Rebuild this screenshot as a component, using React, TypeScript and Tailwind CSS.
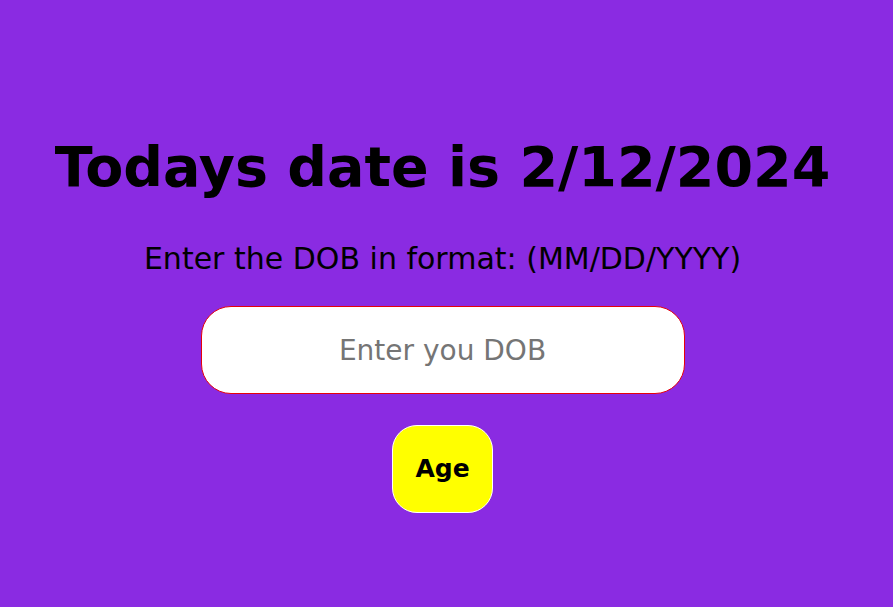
export default function App() {
  return (
    <div
      className="min-h-screen w-full bg-[#8a2be2] flex flex-col items-center pt-[122px] pr-[8px]"
      style={{ fontFamily: '"Comic Sans MS", "DejaVu Sans", sans-serif' }}
    >
      <h1 className="text-[55.5px] leading-[90px] font-bold text-black">Todays date is 2/12/2024</h1>
      <p className="mt-[27px] text-[30px] leading-[40px] text-black">Enter the DOB in format: (MM/DD/YYYY)</p>
      <input
        type="text"
        placeholder="Enter you DOB"
        className="mt-[27px] w-[484px] h-[88px] rounded-[30px] border border-red-600 bg-white text-center text-[28px] placeholder:text-[#757575] outline-none"
      />
      <button className="mt-[31px] w-[101px] h-[88px] rounded-[25px] border border-white bg-[#ffff00] text-[25px] font-bold text-black">
        Age
      </button>
    </div>
  );
}
